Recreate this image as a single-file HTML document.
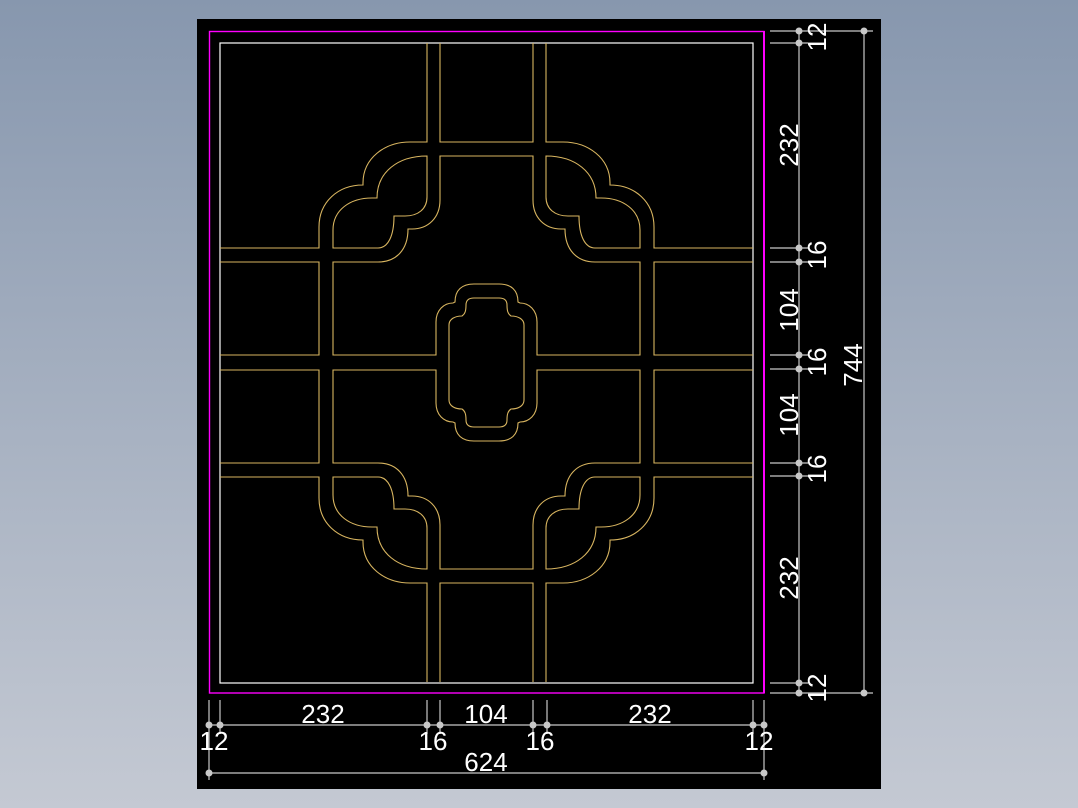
<!DOCTYPE html>
<html><head><meta charset="utf-8"><style>
html,body{margin:0;padding:0;}
body{width:1078px;height:808px;overflow:hidden;background:linear-gradient(#8797ae,#c4c9d3);position:relative;}
svg{position:absolute;left:0;top:0;}
text{font-family:"Liberation Sans",sans-serif;font-size:26px;fill:#fff;}
</style></head><body>
<svg width="1078" height="808" viewBox="0 0 1078 808">
<rect x="197" y="19" width="684" height="770" fill="#000"/>
<g fill="none" stroke-width="1.2">
<rect x="209.5" y="31.5" width="554.5" height="661.5" stroke="#ff00ff" stroke-width="1.4"/>
<line x1="764" y1="31" x2="764" y2="693" stroke="#ff00ff" stroke-width="2"/>
<rect x="220" y="43" width="533" height="640" stroke="#fff"/>
</g>
<defs>
<g id="q" fill="none" stroke="#d8b560" stroke-width="1.1">
<!-- A -->
<path d="M220,248 H319 V227 C319,202 338,185 363,185 L363,183 C363,158 385,142 410,142 H427 V43"/>
<!-- bar bottom -->
<path d="M220,262 H319 V355 H220"/>
<!-- B + D hole -->
<path d="M333,248 V230 C333,210 350,198 372,198 L377,198 C377,172 398,156 427,156 V197 C427,209 418,216 405,216 L394,216 C394,236 388,248 378,248 Z"/>
<!-- C -->
<path d="M440,43 V142 H486.5 M486.5,156 H440 V200 C440,218 428,229 412,229 L408,229 C408,250 396,262 378,262 H333 V355 H436 V322 C436,310 444,303 453,303 L455,302 C455,290 462,284 474,284 H486.5"/>
<!-- medallion inner -->
<path d="M449,362.5 V325 C449,319 455,316 462,316 C465,314 466,311 466,305 C466,300 469,298 474,298 H486.5"/>
</g>
</defs>
<use href="#q"/>
<use href="#q" transform="translate(973,0) scale(-1,1)"/>
<use href="#q" transform="translate(0,725) scale(1,-1)"/>
<use href="#q" transform="translate(973,725) scale(-1,-1)"/>
<!-- dimensions -->
<g stroke="#c8c8c8" stroke-width="1.2" fill="none">
<line x1="799" y1="31" x2="799" y2="693"/>
<line x1="864" y1="31" x2="864" y2="693"/>
<line x1="770" y1="31" x2="873" y2="31"/>
<line x1="770" y1="693" x2="873" y2="693"/>
<line x1="770" y1="43" x2="808" y2="43"/>
<line x1="770" y1="683" x2="808" y2="683"/>
<line x1="770" y1="248" x2="808" y2="248"/>
<line x1="770" y1="262" x2="808" y2="262"/>
<line x1="770" y1="355" x2="808" y2="355"/>
<line x1="770" y1="369" x2="808" y2="369"/>
<line x1="770" y1="463" x2="808" y2="463"/>
<line x1="770" y1="476" x2="808" y2="476"/>
<line x1="209" y1="725" x2="764" y2="725"/>
<line x1="209" y1="773" x2="764" y2="773"/>
<line x1="209" y1="700" x2="209" y2="780"/>
<line x1="764" y1="700" x2="764" y2="780"/>
<line x1="220" y1="700" x2="220" y2="734"/>
<line x1="427" y1="700" x2="427" y2="734"/>
<line x1="440" y1="700" x2="440" y2="734"/>
<line x1="533" y1="700" x2="533" y2="734"/>
<line x1="547" y1="700" x2="547" y2="734"/>
<line x1="753" y1="700" x2="753" y2="734"/>
</g>
<g fill="#c8c8c8">
<circle cx="799" cy="31" r="3.5"/><circle cx="799" cy="43" r="3.5"/>
<circle cx="799" cy="248" r="3.5"/><circle cx="799" cy="262" r="3.5"/>
<circle cx="799" cy="355" r="3.5"/><circle cx="799" cy="369" r="3.5"/>
<circle cx="799" cy="463" r="3.5"/><circle cx="799" cy="476" r="3.5"/>
<circle cx="799" cy="683" r="3.5"/><circle cx="799" cy="693" r="3.5"/>
<circle cx="864" cy="31" r="3.5"/><circle cx="864" cy="693" r="3.5"/>
<circle cx="209" cy="725" r="3.5"/><circle cx="220" cy="725" r="3.5"/>
<circle cx="427" cy="725" r="3.5"/><circle cx="440" cy="725" r="3.5"/>
<circle cx="533" cy="725" r="3.5"/><circle cx="547" cy="725" r="3.5"/>
<circle cx="753" cy="725" r="3.5"/><circle cx="764" cy="725" r="3.5"/>
<circle cx="209" cy="773" r="3.5"/><circle cx="764" cy="773" r="3.5"/>
</g>
<g text-anchor="middle">
<text x="323" y="723">232</text>
<text x="486" y="723">104</text>
<text x="650" y="723">232</text>
<text x="214" y="750">12</text>
<text x="433" y="750">16</text>
<text x="540" y="750">16</text>
<text x="759" y="750">12</text>
<text x="486" y="771">624</text>
<text transform="translate(798,145) rotate(-90)">232</text>
<text transform="translate(826,37) rotate(-90)">12</text>
<text transform="translate(826,255) rotate(-90)">16</text>
<text transform="translate(798,310) rotate(-90)">104</text>
<text transform="translate(826,362) rotate(-90)">16</text>
<text transform="translate(862,365) rotate(-90)">744</text>
<text transform="translate(798,415) rotate(-90)">104</text>
<text transform="translate(826,469) rotate(-90)">16</text>
<text transform="translate(798,578) rotate(-90)">232</text>
<text transform="translate(826,688) rotate(-90)">12</text>
</g>
</svg>
</body></html>
